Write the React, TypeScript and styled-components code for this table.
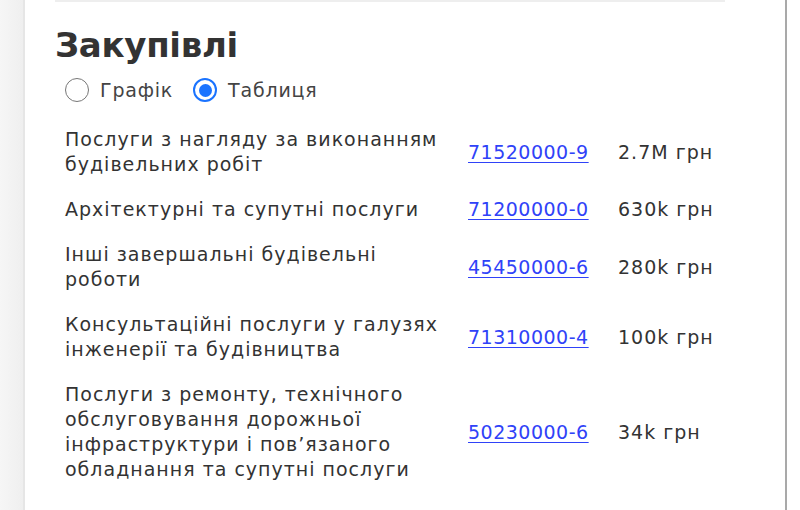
import React, { useState } from 'react'
import styled, { createGlobalStyle } from 'styled-components'

const GlobalStyle = createGlobalStyle`
  html, body {
    margin: 0;
    padding: 0;
    background: #fff;
  }
  body {
    font-family: 'DejaVu Sans', 'Noto Sans', sans-serif;
    color: #333;
  }
`

const Page = styled.div`
  display: flex;
  height: 510px;
  overflow: hidden;
`

const Sidebar = styled.div`
  width: 23px;
  flex-shrink: 0;
  background: linear-gradient(to right, #f6f6f6, #efefef);
  border-right: 2px solid #e6e6e6;
`

const Main = styled.main`
  width: 760px;
  flex-shrink: 0;
  padding: 0 60px 0 30px;
  box-sizing: border-box;
`

const Edge = styled.div`
  width: 2px;
  flex-shrink: 0;
  background: #a9a9a9;
`

const Section = styled.section`
  border-top: 2px solid #eeeeee;
`

const Title = styled.h2`
  margin: 20px 0 0;
  font-size: 34px;
  line-height: 46px;
  font-weight: 700;
  color: #333;
  letter-spacing: -0.3px;
`

const Switch = styled.div`
  display: flex;
  align-items: center;
  gap: 20px;
  padding-left: 10px;
  margin-top: 4px;
  height: 36px;
`

const Option = styled.label`
  display: flex;
  align-items: center;
  gap: 11px;
  font-size: 19px;
  letter-spacing: 0.8px;
  color: #444;
  cursor: pointer;
`

const Dot = styled.span<{ checked: boolean }>`
  width: 24px;
  height: 24px;
  box-sizing: border-box;
  border-radius: 50%;
  border: ${(p) => (p.checked ? '2.5px solid #1a73ff' : '1.5px solid #777')};
  display: flex;
  align-items: center;
  justify-content: center;
  &::after {
    content: '';
    width: 13px;
    height: 13px;
    border-radius: 50%;
    background: #1a73ff;
    display: ${(p) => (p.checked ? 'block' : 'none')};
  }
`

const Table = styled.table`
  margin-top: 9px;
  width: 670px;
  border-collapse: collapse;
  table-layout: fixed;
  font-size: 19px;
  line-height: 25px;
  letter-spacing: 1px;
  color: #333;
  td {
    padding: 10px;
    vertical-align: middle;
  }
`

const Code = styled.a`
  color: #2f42f8;
  letter-spacing: 0.5px;
  text-decoration: underline;
  text-underline-offset: 3px;
`

const purchases = [
  { name: 'Послуги з нагляду за виконанням будівельних робіт', code: '71520000-9', sum: '2.7M грн' },
  { name: 'Архітектурні та супутні послуги', code: '71200000-0', sum: '630k грн' },
  { name: 'Інші завершальні будівельні роботи', code: '45450000-6', sum: '280k грн' },
  { name: 'Консультаційні послуги у галузях інженерії та будівництва', code: '71310000-4', sum: '100k грн' },
  {
    name: 'Послуги з ремонту, технічного обслуговування дорожньої інфраструктури і пов’язаного обладнання та супутні послуги',
    code: '50230000-6',
    sum: '34k грн',
  },
]

export default function App() {
  const [mode, setMode] = useState('table')
  return (
    <Page>
      <GlobalStyle />
      <Sidebar />
      <Main>
        <Section>
          <Title>Закупівлі</Title>
          <Switch>
            <Option onClick={() => setMode('chart')}>
              <Dot checked={mode === 'chart'} />
              Графік
            </Option>
            <Option onClick={() => setMode('table')}>
              <Dot checked={mode === 'table'} />
              Таблиця
            </Option>
          </Switch>
          <Table>
            <colgroup>
              <col style={{ width: 403 }} />
              <col style={{ width: 150 }} />
              <col />
            </colgroup>
            <tbody>
              {purchases.map((p) => (
                <tr key={p.code}>
                  <td>{p.name}</td>
                  <td>
                    <Code href='#'>{p.code}</Code>
                  </td>
                  <td>{p.sum}</td>
                </tr>
              ))}
            </tbody>
          </Table>
        </Section>
      </Main>
      <Edge />
    </Page>
  )
}
